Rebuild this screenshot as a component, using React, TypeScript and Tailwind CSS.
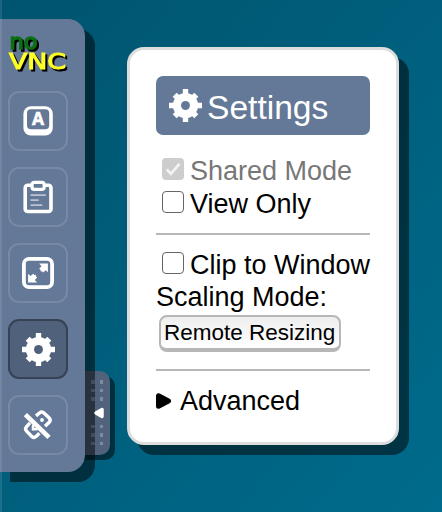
import React from "react";
import { clsx } from "clsx";

function Gear({ size, hole }: { size: number; hole: string }) {
  return (
    <svg width={size} height={size} viewBox="0 0 32 32" className="shrink-0">
      <g fill="white">
        {[0, 45, 90, 135].map((a) => (
          <path key={a} d={a % 90 ? "M13.2 1.2h5.6v29.6h-5.6z" : "M13.4 0h5.2v32h-5.2z"} transform={`rotate(${a} 16 16)`} />
        ))}
        <circle cx="16" cy="16" r="12.2" />
      </g>
      <circle cx="16" cy="16" r="4.3" fill={hole} />
    </svg>
  );
}

function Keyboard() {
  return (
    <svg width="32" height="32" viewBox="0 0 32 32">
      <rect x="1.4" y="1.2" width="29.4" height="29.2" rx="7.5" fill="white" />
      <rect x="5" y="4.2" width="22.2" height="20" rx="4" fill="#647897" />
      <text x="16" y="20.4" textAnchor="middle" fill="white" stroke="white" strokeWidth="0.5" className="font-['Open_Sans',sans-serif] text-[17.5px] font-bold">A</text>
    </svg>
  );
}

function Clipboard() {
  return (
    <svg width="32" height="34" viewBox="0 0 32 34" fill="none" stroke="white">
      <rect x="3.2" y="5.2" width="25.8" height="26.3" rx="2.5" strokeWidth="3.6" />
      <rect x="10" y="2.3" width="12.2" height="7" rx="2.4" strokeWidth="3.2" fill="#647897" />
      <path d="M8.5 15.2h15.3M8.5 20.2h8.3M8.5 25.2h11.8" strokeWidth="1.8" stroke="#bac4d1" />
    </svg>
  );
}

function Fullscreen() {
  return (
    <svg width="32" height="32" viewBox="0 0 32 32" fill="none" stroke="white">
      <rect x="1.9" y="1.9" width="28.2" height="28.2" rx="5.2" strokeWidth="3.8" />
      <path d="M17.2 6.5h8.7v8.7l-2.2-2-2.5 2.3-1.1-1.3-1.4.2-.1-1.5-1.4-1.1 2.3-2.5zM6.1 16.8l2.4 2.3 2.7-2.4 1.2 1.2 1.4-.1.1 1.5 1.3 1.2-2.4 2.4 2.2 2.5H6.1z" fill="white" stroke="none" />
    </svg>
  );
}

function Disconnect() {
  return (
    <svg width="34" height="34" viewBox="0 0 34 34" fill="none" stroke="white">
      <path d="M15 7.8l3.5-2.8q2.5-2 5 .4l4.7 4.6q2 2.1 0 4.3L24 18.3" strokeWidth="3.4" />
      <path d="M9 14.9L5.6 18.7q-2.1 2.3 0 4.5L10.8 28.5q2.2 2 4.3-.1l3.3-3.1" strokeWidth="3.4" />
      <path d="M4.4 6.6L28 29.4" strokeWidth="4.7" />
      <circle cx="21" cy="12" r="1.9" fill="white" stroke="none" />
      <path d="M12 18v3.3h3.5" strokeWidth="2.5" strokeLinecap="round" />
    </svg>
  );
}

function ToolButton({ active, children }: { active?: boolean; children: React.ReactNode }) {
  return (
    <button
      className={clsx(
        "flex h-[60px] w-[60px] items-center justify-center rounded-[11px] border-2",
        active ? "border-[#364253] bg-[#50617b]" : "border-[#778aa5]",
      )}
    >
      {children}
    </button>
  );
}

function Logo() {
  return (
    <div className="flex h-[42px] w-[62px] flex-col font-['DejaVu_Sans',sans-serif] leading-none">
      <svg width="36" height="19" viewBox="0 0 36 19" className="shrink-0 overflow-visible text-[21px] drop-shadow-[2px_2px_0_#000]">
        <text x="1.5" y="16.5" textLength="28" lengthAdjust="spacingAndGlyphs" fill="#0b7013" stroke="#0b7013" strokeWidth="1.5">no</text>
      </svg>
      <svg width="62" height="23" viewBox="0 0 62 23" className="shrink-0 overflow-visible text-[21px] drop-shadow-[2px_2px_0_#000]">
        <text x="1" y="18" textLength="57" lengthAdjust="spacingAndGlyphs" fill="#ffff24" stroke="#ffff24" strokeWidth="1">VNC</text>
      </svg>
    </div>
  );
}

function Dots({ count }: { count: number }) {
  return (
    <div className="flex flex-col gap-[5px]">
      {Array.from({ length: count }, (_, i) => (
        <div key={i} className="flex gap-[5px]">
          <i className="h-[3.5px] w-[3.5px] bg-[#434d59]" />
          <i className="h-[3.5px] w-[3.5px] bg-[#7f8b9c]" />
        </div>
      ))}
    </div>
  );
}

function Check({ label, disabled }: { label: string; disabled?: boolean }) {
  return (
    <label className={clsx("flex h-[33px] items-center pl-[6px] whitespace-nowrap", disabled && "text-[#777]")}>
      <span className={clsx("mr-[6px] mb-[3px] flex h-[22px] w-[22px] shrink-0 items-center justify-center rounded-[4px]", disabled ? "bg-[#cdcdcd]" : "border-[1.5px] border-[#666]")}>
        {disabled && (
          <svg width="18" height="18" viewBox="0 0 18 18">
            <path d="M2.8 9.5l4.1 4.3 8.5-10" fill="none" stroke="#f4f4f4" strokeWidth="2.7" />
          </svg>
        )}
      </span>
      <span className="pt-[2px]">{label}</span>
    </label>
  );
}

export default function App() {
  return (
    <main className="relative flex h-[512px] w-[442px] items-start overflow-hidden bg-linear-to-br from-[#00546f] to-[#006b8c] font-['Liberation_Sans',Arial,sans-serif] text-[27px] text-black">
      <aside className="relative z-10 mt-[19px] flex h-[453px] w-[85px] shrink-0 flex-col rounded-r-[17px] bg-[#647897] pt-[13px] pl-2 shadow-[10px_10px_0_rgba(0,0,0,0.5)]">
        <Logo />
        <div className="mt-[17px] flex flex-col gap-4">
          <ToolButton><Keyboard /></ToolButton>
          <ToolButton><Clipboard /></ToolButton>
          <ToolButton><Fullscreen /></ToolButton>
          <ToolButton active><Gear size={33} hole="#50617b" /></ToolButton>
          <ToolButton><Disconnect /></ToolButton>
        </div>
      </aside>
      <div className="absolute top-0 left-0 z-20 h-full w-[2px] bg-white/10" />
      <div className="absolute top-[371px] left-[76px] h-[84px] w-[34px] rounded-r-[10px] bg-[#50627c] shadow-[5px_5px_0_rgba(0,0,0,0.5)]" />
      <div className="absolute top-[380px] left-[91px] z-20 flex flex-col items-start">
        <Dots count={3} />
        <svg width="12" height="14" viewBox="0 0 12 14" className="mt-[5px] mb-[5px] ml-[2px]">
          <path d="M9 3.5v7L3 7z" fill="white" stroke="white" strokeWidth="3.5" strokeLinejoin="round" />
        </svg>
        <Dots count={3} />
      </div>
      <section className="mt-[47px] ml-[42px] flex h-[398px] w-[272px] shrink-0 flex-col rounded-[17px] border-[3px] border-[#ddd] bg-white px-[26px] pt-[26px] shadow-[10px_10px_0_rgba(0,0,0,0.5)]">
        <h1 className="flex h-[59px] w-[214px] shrink-0 items-center rounded-[7px] bg-[#647897] pl-[13px] text-[33.6px] leading-none text-white">
          <Gear size={33} hole="#647897" />
          <span className="mt-[4px] ml-[5px]">Settings</span>
        </h1>
        <div className="mt-[19px]">
          <Check label="Shared Mode" disabled />
          <Check label="View Only" />
        </div>
        <hr className="mt-[13px] border-t-2 border-[#b8b8b8]" />
        <div className="mt-[13px]">
          <Check label="Clip to Window" />
          <div className="h-8 leading-8">Scaling Mode:</div>
        </div>
        <button className="mt-[2px] ml-[3px] flex h-[37px] w-[182px] items-center rounded-[8px] border-2 border-b-4 border-[#b7b7b7] bg-linear-to-b from-[#eee] to-white pt-px pl-[3px] text-[22.5px] whitespace-nowrap">Remote Resizing</button>
        <hr className="mt-[17px] border-t-2 border-[#b8b8b8]" />
        <div className="mt-[13px] flex h-[34px] items-center">
          <svg width="16" height="18" viewBox="0 0 16 18">
            <path d="M2.5 3.8v10.4L12.5 9z" fill="black" stroke="black" strokeWidth="5" strokeLinejoin="round" />
          </svg>
          <span className="ml-2">Advanced</span>
        </div>
      </section>
    </main>
  );
}
